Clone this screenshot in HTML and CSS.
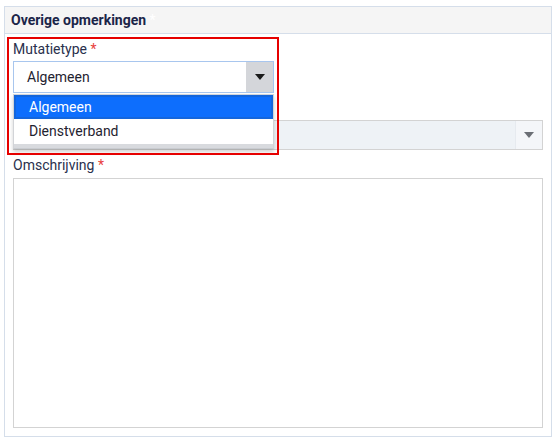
FILE: index.html
```html
<!DOCTYPE html>
<html lang="nl">
<head>
<meta charset="utf-8">
<title>Overige opmerkingen</title>
<link rel="stylesheet" href="styles.css">
</head>
<body>
<section class="panel">
  <header class="panel-head">Overige opmerkingen <span class="ghost-star">*</span></header>
  <div class="panel-body">
    <div class="field field-short">
      <label class="label">Mutatietype <span class="req">*</span></label>
      <div class="select select-active">
        <span class="select-value">Algemeen</span>
        <span class="select-arrow"><svg width="10" height="6" viewBox="0 0 10 6"><path d="M0 0h10L5 6z" fill="#1a1a1a"/></svg></span>
      </div>
    </div>
    <div class="field">
      <div class="label"></div>
      <div class="select select-disabled">
        <span class="select-value"></span>
        <span class="select-arrow"><svg width="10" height="6" viewBox="0 0 10 6"><path d="M0 0h10L5 6z" fill="#6b6f75"/></svg></span>
      </div>
    </div>
    <div class="field field-grow">
      <label class="label">Omschrijving <span class="req">*</span></label>
      <div class="textarea"></div>
    </div>
  </div>
  <ul class="dropdown">
    <li class="option option-selected">Algemeen</li>
    <li class="option">Dienstverband</li>
  </ul>
  <div class="highlight"></div>
</section>
</body>
</html>
```

FILE: styles.css
```css
html, body {
  margin: 0;
  padding: 0;
  background: #ffffff;
}
body {
  font-family: Roboto, "Liberation Sans", Arial, sans-serif;
  font-size: 14px;
  color: #29304d;
}
.panel {
  position: relative;
  margin: 6px 0 0 4px;
  width: 546px;
  height: 429px;
  border: 1px solid #d5deea;
  display: flex;
  flex-direction: column;
}
.panel-head {
  height: 26px;
  flex: none;
  background: #f5f5f5;
  border-bottom: 1px solid #d5deea;
  padding-left: 6px;
  font-weight: 700;
  font-size: 14px;
  line-height: 26px;
  color: #1b2549;
}
.ghost-star {
  color: #ffffff;
  font-weight: 400;
}
.panel-body {
  flex: 1;
  display: flex;
  flex-direction: column;
  gap: 5px;
  padding: 5px 8px 8px 8px;
}
.field {
  display: flex;
  flex-direction: column;
  gap: 2px;
}
.field-short {
  width: 261px;
}
.field-grow {
  flex: 1;
  gap: 3px;
}
.label {
  line-height: 20px;
  height: 20px;
  color: #29304d;
}
.req {
  color: #e8413c;
}
.select {
  display: flex;
  box-sizing: border-box;
}
.select-active {
  height: 32px;
  border: 1px solid #a8c6ee;
  background: #fff;
}
.select-active .select-value {
  flex: 1;
  padding-left: 13px;
  line-height: 30px;
  color: #1f2330;
}
.select-active .select-arrow {
  width: 27px;
  background: #d4d6da;
  display: flex;
  align-items: center;
  justify-content: center;
}
.select-disabled {
  height: 30px;
  border: 1px solid #d3d3d3;
  background: #eef2f6;
}
.select-disabled .select-value {
  flex: 1;
}
.select-disabled .select-arrow {
  width: 26px;
  background: #f4f6f9;
  border-left: 1px solid #e6eaef;
  display: flex;
  align-items: center;
  justify-content: center;
}
.textarea {
  flex: 1;
  border: 1px solid #d3d3d3;
  background: #fff;
}
.dropdown {
  position: absolute;
  left: 8px;
  top: 87px;
  width: 259px;
  margin: 0;
  padding: 0 0 4px 0;
  list-style: none;
  background: #fff;
  border: 1px solid #d2d4d8;
  border-bottom-color: #c9ccd1;
  box-shadow: 0 3px 4px rgba(0, 0, 0, 0.18);
}
.dropdown::after {
  content: "";
  display: block;
  height: 4px;
  margin-bottom: -4px;
  background: #d8dade;
}
.option {
  height: 25px;
  line-height: 25px;
  padding-left: 15px;
  color: #1f2330;
}
.option-selected {
  background: #0d6efd;
  color: #fff;
  box-shadow: inset 0 0 0 2px #1466dc;
  height: 24px;
  line-height: 24px;
}
.highlight {
  position: absolute;
  left: 2px;
  top: 30px;
  width: 268px;
  height: 114px;
  border: 2px solid #e60000;
  pointer-events: none;
}
```
